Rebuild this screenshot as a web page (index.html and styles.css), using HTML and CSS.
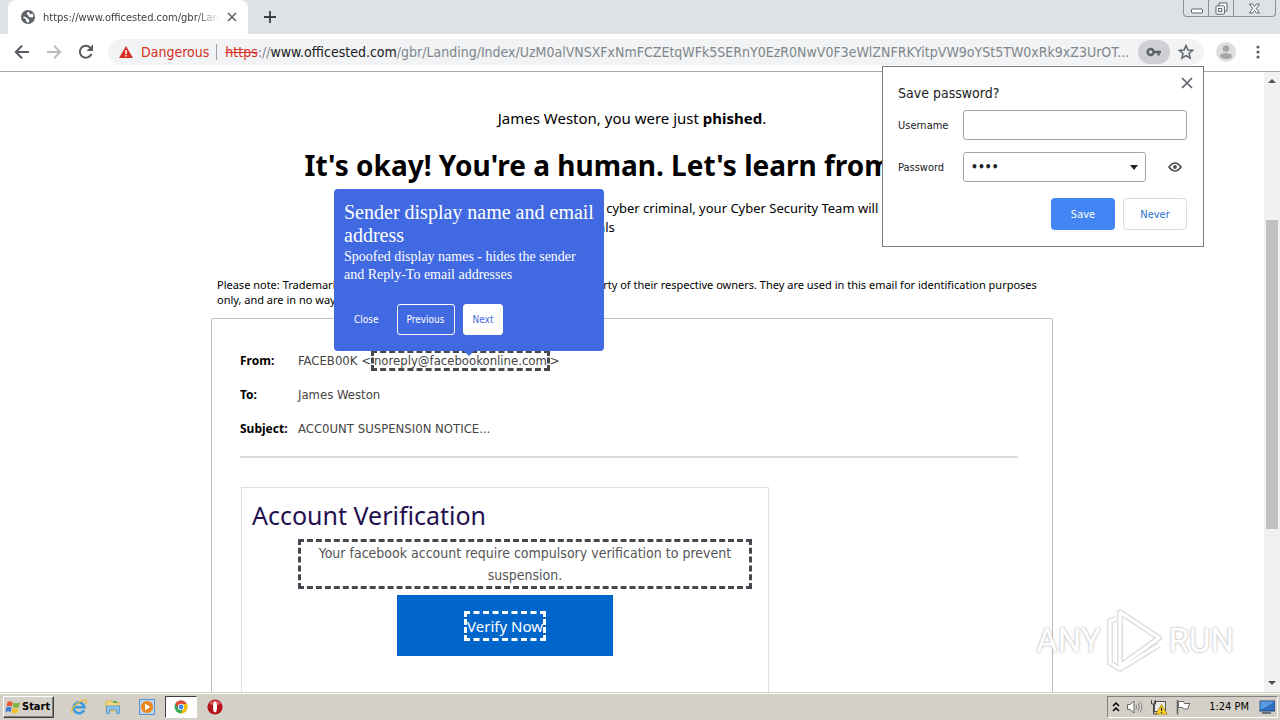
FILE: index.html
```html
<!DOCTYPE html>
<html lang="en">

<head>
    <meta charset="UTF-8">
    <meta name="viewport" content="width=device-width, initial-scale=1.0">
    <title>You were just phished</title>
    <link rel="stylesheet" href="styles.css">
</head>

<body>

    <!-- tab strip -->
    <div class="tabstrip">
        <div class="tab">
            <svg class="globe" viewBox="0 0 16 16" width="16" height="16">
                <circle cx="8" cy="8" r="7" fill="#5f6368"/>
                <path d="M2.6 8.4 L6 10.2 L6 12 L8.2 14 L9.4 11.6 L7 9 L4.6 7.6 Z M8.4 2.4 L6.4 4.8 L8.2 6.2 L9 8 L12.4 8.6 L13.6 7 L12.6 4.6 L10.4 5.4 Z" fill="#fff"/>
            </svg>
            <span class="tab-title">https://www.officested.com/gbr/Lan</span>
            <button class="icon-butt tab-close" aria-label="Close tab">
                <svg viewBox="0 0 10 10" width="10" height="10"><path d="M1 1 L9 9 M9 1 L1 9" stroke="#5f6368" stroke-width="1.6"/></svg>
            </button>
        </div>
        <button class="icon-butt new-tab" aria-label="New tab">
            <svg viewBox="0 0 12 12" width="12" height="12"><path d="M6 0 V12 M0 6 H12" stroke="#3c4043" stroke-width="1.8"/></svg>
        </button>
        <div class="win-controls">
            <button aria-label="Minimize">
                <svg viewBox="0 0 13 13" width="13" height="13"><rect x="1.5" y="7" width="11" height="4" rx="1" fill="#fff" stroke="#5b6170"/></svg>
            </button>
            <button aria-label="Restore">
                <svg viewBox="0 0 13 13" width="13" height="13"><path d="M4 3.5 V1 H12 V9 H9.5" fill="#fff" stroke="#5b6170"/><rect x="1" y="3.8" width="8.4" height="8.4" rx="1" fill="#fff" stroke="#5b6170"/><rect x="3.6" y="6.4" width="3.2" height="3.2" fill="none" stroke="#5b6170"/></svg>
            </button>
            <button aria-label="Close">
                <svg viewBox="0 0 13 13" width="13" height="13"><path d="M1.5 2 H4.5 L6.5 4.5 L8.5 2 H11.5 L8.3 6.5 L11.5 11 H8.5 L6.5 8.5 L4.5 11 H1.5 L4.7 6.5 Z" fill="#fff" stroke="#5b6170"/></svg>
            </button>
        </div>
    </div>

    <!-- toolbar -->
    <div class="toolbar">
        <button class="icon-butt nav-butt" aria-label="Back">
            <svg viewBox="0 0 16 16" width="16" height="16"><path d="M15 8 H2 M8 1.8 L1.8 8 L8 14.2" fill="none" stroke="#5a5d61" stroke-width="2"/></svg>
        </button>
        <button class="icon-butt nav-butt" aria-label="Forward">
            <svg viewBox="0 0 16 16" width="16" height="16"><path d="M1 8 H14 M8 1.8 L14.2 8 L8 14.2" fill="none" stroke="#b9bbbe" stroke-width="2"/></svg>
        </button>
        <button class="icon-butt nav-butt" aria-label="Reload">
            <svg viewBox="0 0 16 16" width="16" height="16"><path d="M13.4 10 A6 6 0 1 1 12.4 3.8" fill="none" stroke="#5a5d61" stroke-width="2"/><path d="M15 0.6 V7 H8.6 Z" fill="#5a5d61"/></svg>
        </button>
        <div class="omnibox">
            <svg viewBox="0 0 14 12" width="14" height="12"><path d="M7 0 L14 12 H0 Z" fill="#d93025"/><path d="M7 4 V8 M7 9 V10.6" stroke="#fff" stroke-width="1.5"/></svg>
            <span class="danger">Dangerous</span>
            <span class="url"><s>https</s>://<b>www.officested.com</b>/gbr/Landing/Index/UzM0alVNSXFxNmFCZEtqWFk5SERnY0EzR0NwV0F3eWlZNFRKYitpVW9oYSt5TW0xRk9xZ3UrOT...</span>
            <button class="icon-butt key-butt" aria-label="Saved passwords">
                <svg viewBox="0 0 16 10" width="16" height="10"><circle cx="4.6" cy="5" r="3" fill="none" stroke="#5f6368" stroke-width="2.4"/><path d="M7.6 5 H15 M12.6 5 V8.6" stroke="#5f6368" stroke-width="2.4"/></svg>
            </button>
            <button class="icon-butt star-butt" aria-label="Bookmark this page">
                <svg viewBox="0 0 16 16" width="16" height="16"><path d="M8 1.6 L9.9 6 L14.6 6.4 L11 9.5 L12.1 14.2 L8 11.7 L3.9 14.2 L5 9.5 L1.4 6.4 L6.1 6 Z" fill="none" stroke="#5f6368" stroke-width="1.5"/></svg>
            </button>
        </div>
        <button class="icon-butt profile-butt" aria-label="Profile">
            <svg viewBox="0 0 20 20" width="20" height="20"><circle cx="10" cy="10" r="10" fill="#dedede"/><circle cx="10" cy="6.6" r="3.2" fill="#a5a5a5"/><ellipse cx="10" cy="14" rx="6" ry="3" fill="#a5a5a5"/></svg>
        </button>
        <button class="icon-butt menu-butt" aria-label="Menu">
            <svg viewBox="0 0 4 14" width="4" height="14" fill="#5f6368"><circle cx="2" cy="2" r="1.6"/><circle cx="2" cy="7" r="1.6"/><circle cx="2" cy="12" r="1.6"/></svg>
        </button>
    </div>

    <!-- save password bubble -->
    <form class="bubble">
        <button type="button" class="icon-butt bubble-close" aria-label="Close">
            <svg viewBox="0 0 12 12" width="12" height="12"><path d="M1 1 L11 11 M11 1 L1 11" stroke="#5f6368" stroke-width="1.7"/></svg>
        </button>
        <h2>Save password?</h2>
        <div class="field">
            <label for="user">Username</label>
            <input type="text" id="user">
        </div>
        <div class="field">
            <label for="pass">Password</label>
            <div class="select-wrap">
                <select id="pass"><option>••••</option></select>
                <svg class="caret" viewBox="0 0 8 5" width="8" height="5"><path d="M0 0 H8 L4 5 Z" fill="#202124"/></svg>
            </div>
            <button type="button" class="icon-butt eye-butt" aria-label="Show password">
                <svg viewBox="0 0 14 10" width="14" height="10"><path d="M1 5 Q7 -3 13 5 Q7 13 1 5 Z" fill="none" stroke="#4a4d51" stroke-width="1.6"/><circle cx="7" cy="5" r="1.9" fill="#4a4d51"/></svg>
            </button>
        </div>
        <div class="bubble-butts">
            <button type="button" class="save">Save</button>
            <button type="button" class="never">Never</button>
        </div>
    </form>

    <div class="viewport">
        <main class="page">
            <div class="content">
                <p class="greeting">James Weston, you were just <b>phished</b>.</p>
                <h1>It's okay! You're a human. Let's learn from this.</h1>
                <p class="intro">If this email had been sent by a real cyber criminal, your Cyber Security Team will<br>
                    help you. Never share any credentials</p>
                <p class="note">Please note: Trademarks and brand names shown are the registered property of their respective owners. They are used in this email for identification purposes
                    <br>only, and are in no way affiliated.</p>

                <div class="mail">
                    <dl>
                        <dt>From:</dt>
                        <dd>FACEB00K &lt;<span class="hint">noreply@facebookonline.com</span>&gt;</dd>
                        <dt>To:</dt>
                        <dd>James Weston</dd>
                        <dt>Subject:</dt>
                        <dd>ACC0UNT SUSPENSI0N NOTICE...</dd>
                    </dl>
                    <hr>
                    <div class="card">
                        <h2>Account Verification</h2>
                        <p class="hint">Your facebook account require compulsory verification to prevent suspension.</p>
                        <button class="verify"><span class="hint">Verify Now</span></button>
                    </div>
                </div>

                <!-- tour popover -->
                <div class="tour">
                    <h3>Sender display name and email address</h3>
                    <p>Spoofed display names - hides the sender and Reply-To email addresses</p>
                    <div class="tour-butts">
                        <button class="close">Close</button>
                        <button class="prev">Previous</button>
                        <button class="next">Next</button>
                    </div>
                </div>
            </div>
        </main>
        <div class="scrollbar">
            <svg viewBox="0 0 8 4" width="8" height="4"><path d="M0 4 L4 0 L8 4 Z" fill="#505050"/></svg>
            <div class="track"><div class="thumb"></div></div>
            <svg viewBox="0 0 8 4" width="8" height="4"><path d="M0 0 L4 4 L8 0 Z" fill="#505050"/></svg>
        </div>

        <div class="watermark">
            <span>ANY</span>
            <svg viewBox="0 0 58 66" width="58" height="66" fill="none" stroke-linejoin="round">
                <g stroke="#dedede" stroke-width="6">
                    <path d="M14 5 L53 31 L14 59 Z"/>
                    <path d="M10 12 L4 14 V56 L14 62 L53 38"/>
                </g>
                <g stroke="#fff" stroke-width="3">
                    <path d="M14 5 L53 31 L14 59 Z"/>
                    <path d="M10 12 L4 14 V56 L14 62 L53 38"/>
                </g>
            </svg>
            <span>RUN</span>
        </div>
    </div>

    <!-- taskbar -->
    <div class="taskbar">
        <button class="start">
            <svg viewBox="0 0 16 16" width="16" height="16">
                <path d="M2.5 3 Q5 1.4 7.6 3 L6.8 7.4 Q4.4 6 1.6 7.4 Z" fill="#e8562a"/>
                <path d="M8.6 3.4 Q11.5 5 14.8 3.4 L13.8 8 Q11 9.4 7.8 7.8 Z" fill="#7ab53a"/>
                <path d="M1.4 8.4 Q4 7 6.6 8.4 L5.6 13 Q3.4 11.6 0.6 13 Z" fill="#3c7bd0"/>
                <path d="M7.6 8.8 Q10.6 10.4 13.6 9 L12.6 13.6 Q9.6 15 6.6 13.4 Z" fill="#f7c12c"/>
            </svg>
            Start
        </button>
        <div class="quick">
            <button class="task" aria-label="Internet Explorer">
                <svg viewBox="0 0 18 18" width="18" height="18"><path d="M14 12 A5.4 5.4 0 1 1 14.4 9.2 H5" fill="none" stroke="#3a9be0" stroke-width="2.6"/><path d="M2 15.4 C0 11 9 2.4 15 2 C17.4 2 16.6 4.4 15.6 6" fill="none" stroke="#e9b93a" stroke-width="1.3"/></svg>
            </button>
            <button class="task" aria-label="Explorer">
                <svg viewBox="0 0 18 18" width="18" height="18"><path d="M2 3 H7 L8 4.5 H15 V13 H2 Z" fill="#f3d77c" stroke="#d9b64e"/><rect x="9" y="3" width="4" height="2" fill="#5db04c"/><path d="M2.5 8 H15.5 V15.5 H12.5 V12 Q9 10 5.5 12 V15.5 H2.5 Z" fill="#8cc4ea" stroke="#5d9bd0"/></svg>
            </button>
            <button class="task" aria-label="Media Player">
                <svg viewBox="0 0 18 18" width="18" height="18"><rect x="1.5" y="1.5" width="15" height="15" fill="#b9d6f0" stroke="#5c92cd"/><circle cx="9" cy="9" r="6" fill="#f08519"/><path d="M7 5.6 L12.4 9 L7 12.4 Z" fill="#fff"/></svg>
            </button>
            <button class="task active" aria-label="Chrome">
                <svg viewBox="0 0 16 16" width="14" height="14"><circle cx="8" cy="8" r="7.4" fill="#34a853"/><path d="M1.6 4.3 A7.4 7.4 0 0 1 14.5 4.5 H8 L4.9 9.6 Z" fill="#ea4335"/><path d="M14.5 4.5 A7.4 7.4 0 0 1 7.6 15.4 L11.2 9.6 L10 4.5 Z" fill="#fbbc05"/><circle cx="8" cy="8" r="3.6" fill="#fff"/><circle cx="8" cy="8" r="2.8" fill="#4285f4"/></svg>
            </button>
            <button class="task" aria-label="Opera">
                <svg viewBox="0 0 18 18" width="18" height="18"><circle cx="9" cy="9" r="7.6" fill="#b5121b"/><path d="M3 6 A7 7 0 0 1 15 6 Q9 8 3 6 Z" fill="#d9595f"/><ellipse cx="9" cy="9" rx="2" ry="5.4" fill="#fff"/></svg>
            </button>
        </div>
        <div class="tray">
            <svg viewBox="0 0 8 12" width="8" height="12"><path d="M1 5 L4 2 L7 5 M1 10 L4 7 L7 10" fill="none" stroke="#000" stroke-width="1.5"/></svg>
            <svg viewBox="0 0 18 16" width="18" height="16"><path d="M1.5 5.5 H4 L8 2 V14 L4 10.5 H1.5 Z" fill="#fff" stroke="#666"/><path d="M10 5.5 Q11.6 8 10 10.5 M12 4 Q14.6 8 12 12 M14 2.5 Q17.6 8 14 13.5" fill="none" stroke="#888"/></svg>
            <svg viewBox="0 0 18 16" width="18" height="16"><rect x="4.5" y="2.5" width="11" height="10" fill="#e8e8e8" stroke="#555"/><path d="M1.5 1 V5 H5.5 V1 M3.5 5 V15 H8" fill="none" stroke="#444"/><path d="M11.5 5.5 L17 15 H6 Z" fill="#ffd42a" stroke="#a98400" stroke-width="0.8"/><path d="M11.5 8.5 V12 M11.5 13 V14" stroke="#222" stroke-width="1.2"/></svg>
            <svg viewBox="0 0 18 16" width="18" height="16"><path d="M3.5 1 V15.5" stroke="#666" stroke-width="1.6"/><path d="M4.5 2.5 H9.5 L10.5 4.5 H16 L14.5 7 L14 10 H9.5 L8.5 8.5 H4.5 Z" fill="#fff" stroke="#666"/></svg>
            <span class="clock">1:24 PM</span>
            <svg viewBox="0 0 16 14" width="16" height="14"><rect x="1" y="1" width="15" height="10" fill="#2d6fc0" stroke="#1c4681"/><path d="M1.5 10 L15 2 V1.5 H1.5 Z" fill="#5b9be0"/><path d="M3 13 H12" stroke="#45536a" stroke-width="1.5"/></svg>
        </div>
    </div>

</body>

</html>
```
FILE: styles.css
```css
* {
    box-sizing: border-box;
}

body {
    margin: 0;
    height: 100vh;
    display: flex;
    flex-direction: column;
    position: relative;
    overflow: hidden;
    background-color: white;
    font-family: "DejaVu Sans Condensed", "DejaVu Sans", sans-serif;
}

h1, h2, h3, p, dl, dd {
    margin: 0;
}

button {
    font-family: inherit;
    padding: 0;
}

svg {
    flex: none;
}

.icon-butt {
    display: flex;
    align-items: center;
    justify-content: center;
    flex: none;
    background: none;
    border: none;
}

/* tab strip */
.tabstrip {
    display: flex;
    flex: none;
    height: 34px;
    padding-left: 8px;
    background-color: #dee1e6;
}

.tab {
    display: flex;
    align-items: center;
    width: 240px;
    padding: 0 8px 0 12px;
    background-color: white;
    border-radius: 8px 8px 0 0;
}

.tab-title {
    flex: 1;
    min-width: 0;
    margin-left: 7px;
    overflow: hidden;
    white-space: nowrap;
    font-size: 11px;
    color: #3c4043;
    -webkit-mask-image: linear-gradient(to right, black 86%, transparent);
    mask-image: linear-gradient(to right, black 86%, transparent);
}

.tab-close {
    width: 16px;
    height: 16px;
    margin-left: 4px;
}

.new-tab {
    width: 28px;
    margin-left: 8px;
}

.win-controls {
    display: flex;
    width: 93px;
    height: 17px;
    margin: 0 4px 0 auto;
    border: 1px solid #8b909c;
    border-top: none;
    border-radius: 0 0 4px 4px;
}

.win-controls button {
    display: flex;
    align-items: center;
    justify-content: center;
    width: 25px;
    background: none;
    border: none;
    border-right: 1px solid #8b909c;
}

.win-controls button:last-child {
    flex: 1;
    border-right: none;
}

/* toolbar */
.toolbar {
    display: flex;
    align-items: center;
    flex: none;
    height: 38px;
    padding: 0 10px 1px 6px;
    border-bottom: 1px solid #a8a8a8;
}

.nav-butt {
    width: 32px;
    height: 28px;
}

.omnibox {
    display: flex;
    align-items: center;
    flex: 1;
    min-width: 0;
    height: 26px;
    margin-left: 6px;
    padding: 0 6px 0 11px;
    background-color: #f1f3f4;
    border-radius: 13px;
    font-size: 14px;
}

.danger {
    margin-left: 8px;
    padding-right: 7px;
    border-right: 1px solid #9aa0a6;
    line-height: 16px;
    color: #d93025;
}

.url {
    flex: 1;
    min-width: 0;
    margin-left: 8px;
    overflow: hidden;
    white-space: nowrap;
    color: #80868b;
}

.url s {
    color: #d93025;
}

.url b {
    font-weight: normal;
    color: #202124;
}

.key-butt {
    width: 32px;
    height: 24px;
    background-color: #ced0d3;
    border-radius: 12px;
}

.star-butt {
    width: 24px;
    height: 24px;
    margin-left: 4px;
}

.profile-butt {
    width: 32px;
    margin-left: 6px;
}

.menu-butt {
    width: 24px;
    margin-left: 4px;
}

/* save password bubble */
.bubble {
    position: absolute;
    top: 66px;
    right: 76px;
    z-index: 5;
    width: 322px;
    height: 181px;
    padding: 16px 16px 0 15px;
    background-color: white;
    border: 1px solid #7d7d7d;
    font-size: 11px;
    color: #202124;
}

.bubble h2 {
    font-size: 14px;
    font-weight: normal;
    line-height: 20px;
}

.bubble-close {
    position: absolute;
    top: 8px;
    right: 8px;
    width: 16px;
    height: 16px;
}

.field {
    display: flex;
    align-items: center;
    height: 30px;
    margin-top: 7px;
}

.field + .field {
    margin-top: 12px;
}

.field label {
    width: 65px;
}

.field input,
.field select {
    flex: 1;
    min-width: 0;
    height: 30px;
    padding: 0 7px;
    border: 1px solid #a5a5a5;
    border-radius: 3px;
    background-color: white;
    font: 12px "DejaVu Sans Condensed", sans-serif;
    color: #202124;
}

.select-wrap {
    display: flex;
    flex: 1;
    position: relative;
}

.field select {
    appearance: none;
    font-weight: bold;
}

.caret {
    position: absolute;
    top: 13px;
    right: 8px;
}

.eye-butt {
    width: 24px;
    margin-left: 17px;
}

.bubble-butts {
    display: flex;
    justify-content: flex-end;
    gap: 8px;
    margin-top: 16px;
}

.bubble-butts button {
    width: 64px;
    height: 32px;
    border-radius: 4px;
    font-size: 11px;
}

.save {
    border: none;
    background-color: #4285f4;
    color: white;
}

.never {
    border: 1px solid #dadce0;
    background-color: white;
    color: #2a6fc9;
}

/* page */
.viewport {
    display: flex;
    flex: 1;
    min-height: 0;
    position: relative;
}

.page {
    flex: 1;
    overflow: hidden;
    font-family: "Noto Sans", sans-serif;
    color: black;
}

.content {
    position: relative;
    max-width: 842px;
    margin: 0 auto;
    padding-top: 34px;
}

.greeting {
    font-size: 15px;
    line-height: 24px;
    text-align: center;
}

h1 {
    margin-top: 16px;
    font-size: 28px;
    line-height: 38px;
    text-align: center;
}

.intro {
    margin-top: 15px;
    padding-left: 175px;
    font-size: 13px;
    line-height: 19px;
}

.note {
    margin-top: 40px;
    padding-left: 6px;
    font-size: 11px;
    line-height: 15px;
    white-space: nowrap;
}

.mail {
    height: 480px;
    margin-top: 11px;
    padding: 25px 34px 0 28px;
    border: 1px solid #bdbdbd;
    border-radius: 2px;
}

dl {
    display: grid;
    grid-template-columns: 58px 1fr;
    line-height: 34px;
}

dt {
    font-size: 12px;
    font-weight: bold;
}

dd {
    font-family: "DejaVu Sans Condensed", sans-serif;
    font-size: 13px;
    color: #444;
}

.hint {
    border: 3px dashed #444950;
}

hr {
    height: 2px;
    margin: 10px 0 0;
    border: none;
    background-color: #dcdcdc;
}

.card {
    width: 528px;
    height: 400px;
    margin: 29px 0 0 1px;
    padding: 9px 10px;
    border: 1px solid #e0e0e0;
}

.card h2 {
    font-size: 25px;
    font-weight: normal;
    line-height: 36px;
    color: #23104f;
}

.card p {
    margin: 6px 6px 6px 46px;
    font-family: "DejaVu Sans Condensed", sans-serif;
    font-size: 14px;
    line-height: 22px;
    text-align: center;
    color: #555;
}

.verify {
    display: flex;
    align-items: center;
    justify-content: center;
    width: 216px;
    height: 61px;
    margin: 0 auto;
    border: none;
    background-color: #0066cc;
    font-size: 15px;
    line-height: 24px;
    color: white;
}

.verify .hint {
    border-color: white;
}

/* tour popover */
.tour {
    position: absolute;
    top: 117px;
    left: 123px;
    width: 270px;
    height: 162px;
    padding: 12px 10px 0;
    background-color: #4169e1;
    border-radius: 4px;
    font-family: "Liberation Serif", serif;
    color: white;
}

.tour::after {
    content: "";
    position: absolute;
    top: 100%;
    left: 50%;
    margin-left: -5px;
    border: 5px solid transparent;
    border-top-color: #4169e1;
}

.tour h3 {
    font-size: 20px;
    font-weight: normal;
    line-height: 23px;
}

.tour p {
    margin-top: 1px;
    font-size: 14px;
    line-height: 18px;
}

.tour-butts {
    display: flex;
    margin-top: 20px;
    gap: 8px;
}

.tour-butts button {
    height: 31px;
    padding: 0 9px;
    border: 1px solid white;
    border-radius: 3px;
    background: none;
    font-family: "DejaVu Sans Condensed", sans-serif;
    font-size: 10px;
    color: white;
}

.tour-butts .close {
    border-color: transparent;
}

.tour-butts .next {
    background-color: white;
    color: #4169e1;
}

/* scrollbar */
.scrollbar {
    display: flex;
    flex-direction: column;
    align-items: center;
    width: 16px;
    padding: 7px 0;
    background-color: #f1f1f1;
}

.track {
    flex: 1;
    width: 12px;
    padding-top: 137px;
}

.thumb {
    height: 67%;
    background-color: #c1c1c1;
}

.watermark {
    display: flex;
    align-items: center;
    gap: 5px;
    position: absolute;
    right: 46px;
    bottom: 19px;
    font: 33px "Roboto", sans-serif;
    color: white;
    text-shadow: 0 0 2px #bbb, 0 0 3px #ccc;
}

/* taskbar */
.taskbar {
    display: flex;
    align-items: center;
    flex: none;
    height: 28px;
    padding: 0 2px 0 3px;
    background-color: #d4d0c8;
    border-top: 1px solid #d4d0c8;
    box-shadow: inset 0 1px white;
}

.start {
    display: flex;
    align-items: center;
    gap: 1px;
    height: 22px;
    padding: 0 3px 0 1px;
    border: 1px solid;
    border-color: white #404040 #404040 white;
    box-shadow: inset -1px -1px #808080;
    background-color: #d4d0c8;
    font-size: 11px;
    font-weight: bold;
    color: black;
}

.quick {
    display: flex;
    gap: 2px;
    margin-left: 9px;
}

.task {
    display: flex;
    align-items: center;
    justify-content: center;
    width: 32px;
    height: 22px;
    border: none;
    background: none;
}

.task.active {
    border: 1px solid;
    border-color: #404040 white white #404040;
    background-color: white;
}

.tray {
    display: flex;
    align-items: center;
    gap: 6px;
    height: 22px;
    margin-left: auto;
    padding: 0 2px 0 4px;
    border: 1px solid;
    border-color: #808080 white white #808080;
}

.clock {
    margin: 0 4px 0 11px;
    font-size: 11px;
    color: black;
}
```
